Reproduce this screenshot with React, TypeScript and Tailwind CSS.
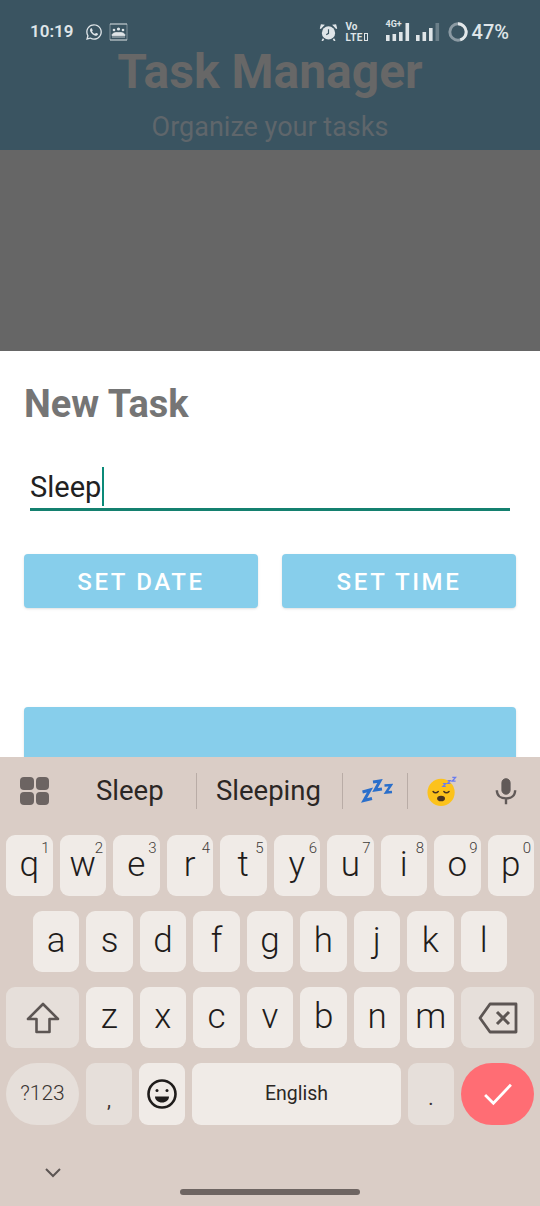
import { FaWhatsapp } from "react-icons/fa";

const row1 = [
  ["q", "1"],
  ["w", "2"],
  ["e", "3"],
  ["r", "4"],
  ["t", "5"],
  ["y", "6"],
  ["u", "7"],
  ["i", "8"],
  ["o", "9"],
  ["p", "0"],
];
const row2 = ["a", "s", "d", "f", "g", "h", "j", "k", "l"];
const row3 = ["z", "x", "c", "v", "b", "n", "m"];

function Key({ label, hint }: { label: string; hint?: string }) {
  return (
    <div className="relative flex h-[61px] flex-1 items-center justify-center rounded-[9px] bg-[#f0ebe7] pb-[2px] text-[35px] font-[350] leading-none text-[#1f1c1b]">
      {label}
      {hint && <span className="absolute right-[3px] top-[3px] text-[15px] font-light leading-[20px] text-[#3f3b39]">{hint}</span>}
    </div>
  );
}

function AlarmIcon() {
  return (
    <svg width="19" height="18" viewBox="0 0 21 20" className="text-[#dfe5e8]">
      <circle cx="10.500" cy="11" r="7.400" fill="currentColor" />
      <path d="M1.500 6.200 5 2.400 2.600 2.200ZM19.500 6.200 16 2.400 18.400 2.200Z" fill="currentColor" stroke="currentColor" strokeWidth="1.400" />
      <path d="M5 17.500 3.500 20M16 17.500 17.500 20" stroke="currentColor" strokeWidth="1.800" />
      <path d="M10.500 7v4.500l-2.500 1.500" stroke="#3a5461" strokeWidth="1.300" fill="none" />
    </svg>
  );
}

function GroupIcon() {
  return (
    <svg width="19" height="18" viewBox="0 0 19 18" className="text-[#dfe5e8]">
      <path d="M1 1v16M18 1v16" stroke="currentColor" strokeWidth="0.700" opacity="0.600" />
      <path d="M1 1h17M1 17h17" stroke="currentColor" strokeWidth="1" />
      <circle cx="9.500" cy="6" r="1.600" fill="currentColor" />
      <circle cx="5" cy="7" r="1.300" fill="currentColor" />
      <circle cx="14" cy="7" r="1.300" fill="currentColor" />
      <path d="M3 12.500c0-2.500 3-3 6.500-3s6.500.5 6.500 3ZM3 14h13" fill="currentColor" stroke="currentColor" strokeWidth="0.800" />
    </svg>
  );
}

function SignalBars({ heights, fadeLast }: { heights: number[]; fadeLast?: boolean }) {
  return (
    <svg width="24" height="18" viewBox="0 0 24 18" className="text-[#dfe5e8]">
      {heights.map((h, i) => (
        <rect key={i} x={i * 6.500} y={18 - h} width="3.600" height={h} fill="currentColor" opacity={fadeLast && i === 3 ? 0.3 : 1} />
      ))}
    </svg>
  );
}

function Zzz() {
  return (
    <svg width="32" height="26" viewBox="0 0 32 26" fill="none" stroke="#2a6fcb" strokeWidth="3">
      <path d="M1.500 14 9 12 3 22.500l8-2" />
      <path d="M12 4l7-1-5 9 7-1" />
      <path d="M23.500 7.500 30 7l-5 7.500 6-.5" strokeWidth="2.400" />
    </svg>
  );
}

function SleepEmoji() {
  return (
    <svg width="30" height="30" viewBox="0 0 32 32">
      <circle cx="15" cy="17.500" r="14.500" fill="#fcc21b" />
      <path d="M6.500 16.500c1.500 1.800 3.800 1.800 5.500 0M18 16.500c1.500 1.800 3.800 1.800 5.500 0" stroke="#4a3420" strokeWidth="1.600" fill="none" strokeLinecap="round" />
      <ellipse cx="15" cy="24" rx="4.200" ry="3" fill="#4a3420" />
      <path d="M17 8h3l-3 3h3" stroke="#6a7cf0" strokeWidth="1.300" fill="none" />
      <path d="M22 5h3l-3 3h3" stroke="#6a7cf0" strokeWidth="1.300" fill="none" />
      <path d="M27 1.500h3.500l-3.500 4h3.500" stroke="#6a7cf0" strokeWidth="1.500" fill="none" />
    </svg>
  );
}

export default function App() {
  return (
    <div className="flex h-[1206px] w-[540px] flex-col overflow-hidden bg-white font-['Roboto',sans-serif]">
      {/* dimmed app header */}
      <div className="relative h-[150px] bg-[#3a5461]">
        <div className="flex h-[48px] items-center justify-between pl-[30px] pr-[31px] pt-[15px] text-[#dfe5e8]">
          <div className="flex items-center">
            <span className="text-[17px] font-semibold">10:19</span>
            <FaWhatsapp className="ml-[12px] text-[18px]" />
            <span className="ml-[6px]">
              <GroupIcon />
            </span>
          </div>
          <div className="flex items-center">
            <AlarmIcon />
            <div className="ml-[8px] flex w-[23px] flex-col text-[10px] font-bold leading-[11px]">
              <span>Vo</span>
              <span className="flex items-center tracking-[0.03em]">
                LTE
                <span className="ml-[1px] h-[8px] w-[4px] border border-[#dfe5e8]" />
              </span>
            </div>
            <div className="relative ml-[17px] h-[18px] w-[24px]">
              <span className="absolute -top-[4px] left-0 text-[9px] font-bold leading-[11px]">4G+</span>
              <SignalBars heights={[6, 7, 9, 18]} />
            </div>
            <div className="ml-[6px] h-[18px] w-[24px]">
              <SignalBars heights={[6, 9, 13, 18]} fadeLast />
            </div>
            <svg width="20" height="20" viewBox="0 0 22 22" className="ml-[8px]" fill="none" strokeWidth="3.200">
              <circle cx="11" cy="11" r="9" stroke="#8b9aa3" />
              <path d="M11 2a9 9 0 0 1 2.500 17.650" stroke="#e3e8ea" />
            </svg>
            <span className="ml-[4px] text-[20px] font-medium">47%</span>
          </div>
        </div>
        <div className="flex flex-col items-center">
          <h1 className="mt-[-3px] text-[48px] font-bold leading-[54px] text-[#676767]">Task Manager</h1>
          <p className="mt-[12px] text-[27px] leading-[32px] text-[#5f666b]">Organize your tasks</p>
        </div>
      </div>

      <div className="h-[201px] bg-[#666666]" />

      {/* dialog sheet */}
      <div className="h-[406px] overflow-hidden bg-white px-[24px]">
        <h2 className="mt-[32px] text-[38px] font-bold leading-[42px] text-[#757575]">New Task</h2>
        <div className="mx-[6px] mt-[42px] flex h-[44px] items-start border-b-[3px] border-[#14806f]">
          <span className="mt-[2px] text-[29px] leading-[36px] text-[#212121]">Sleep</span>
          <span className="ml-[1px] h-[39px] w-[2px] bg-[#0b8a78]" />
        </div>
        <div className="mt-[43px] flex gap-[24px]">
          <button className="h-[54px] flex-1 rounded-[4px] bg-[#87ceeb] pt-[2px] text-[24px] font-medium tracking-[0.11em] text-white shadow-sm">SET DATE</button>
          <button className="h-[54px] flex-1 rounded-[4px] bg-[#87ceeb] pt-[2px] text-[24px] font-medium tracking-[0.11em] text-white shadow-sm">SET TIME</button>
        </div>
        <div className="mt-[99px] h-[100px] rounded-[4px] bg-[#87ceeb] shadow-sm" />
      </div>

      {/* keyboard */}
      <div className="relative flex-1 bg-[#dacdc6]">
        <div className="flex h-[78px] items-center pb-[10px]">
          <div className="ml-[20px] grid w-[29px] grid-cols-2 gap-[2px]">
            <span className="h-[13px] rounded-[4px] bg-[#6c6462]" />
            <span className="h-[13px] rounded-[4px] bg-[#6c6462]" />
            <span className="h-[13px] rounded-[4px] bg-[#6c6462]" />
            <span className="h-[13px] rounded-[4px] bg-[#6c6462]" />
          </div>
          <span className="ml-[47px] w-[67px] text-[27.500px] leading-none text-[#2b2725]">Sleep</span>
          <span className="ml-[33px] h-[36px] w-[1px] bg-[#b9aca6]" />
          <span className="ml-[19px] w-[105px] text-[27.500px] leading-none text-[#2b2725]">Sleeping</span>
          <span className="ml-[21px] h-[36px] w-[1px] bg-[#b9aca6]" />
          <span className="ml-[18px]">
            <Zzz />
          </span>
          <span className="ml-[14px] h-[36px] w-[1px] bg-[#b9aca6]" />
          <span className="ml-[19px]">
            <SleepEmoji />
          </span>
          <svg width="22" height="29" viewBox="0 0 24 30" fill="none" stroke="#615a58" className="ml-[38px]">
            <rect x="7.500" y="1" width="9" height="17" rx="4.500" fill="#615a58" strokeWidth="1" />
            <path d="M2 13.500c0 6 4.500 9 10 9s10-3 10-9M12 22.500V29" strokeWidth="2.600" />
          </svg>
        </div>

        <div className="flex flex-col gap-[15px] px-[6px]">
          <div className="flex gap-[7px]">
            {row1.map(([k, n]) => (
              <Key key={k} label={k} hint={n} />
            ))}
          </div>
          <div className="flex gap-[7px] px-[27px]">
            {row2.map((k) => (
              <Key key={k} label={k} />
            ))}
          </div>
          <div className="flex gap-[7px]">
            <div className="flex h-[61px] w-[73px] items-center justify-center rounded-[9px] bg-[#e6dfda]">
              <svg width="36" height="34" viewBox="0 0 36 34" fill="none" stroke="#5c5553" strokeWidth="2.600" strokeLinejoin="round">
                <path d="M18 3 3 18h8.500v13h13V18H33Z" />
              </svg>
            </div>
            {row3.map((k) => (
              <Key key={k} label={k} />
            ))}
            <div className="flex h-[61px] w-[73px] items-center justify-center rounded-[9px] bg-[#e6dfda]">
              <svg width="40" height="34" viewBox="0 0 40 34" fill="none" stroke="#5c5553" strokeWidth="2.800" strokeLinejoin="round">
                <path d="M12 3h26v28H12L2 17Z" />
                <path d="M19 11l12 12M31 11 19 23" strokeWidth="3" />
              </svg>
            </div>
          </div>
          <div className="flex gap-[7px]">
            <div className="flex h-[62px] w-[73px] items-center justify-center rounded-full bg-[#e6dfda] text-[21px] font-light text-[#3a3533]">?123</div>
            <div className="flex h-[62px] w-[46px] items-end justify-center rounded-[9px] bg-[#e6dfda] pb-[15px] text-[20px] leading-none text-[#3a3533]">,</div>
            <div className="flex h-[62px] w-[46px] items-center justify-center rounded-[9px] bg-[#f0ebe7]">
              <svg width="32" height="32" viewBox="0 0 32 32" fill="none" stroke="#1f1c1b" strokeWidth="2.600">
                <circle cx="16" cy="16" r="13.500" />
                <circle cx="11" cy="12.500" r="1.500" fill="#1f1c1b" stroke="none" />
                <circle cx="21" cy="12.500" r="1.500" fill="#1f1c1b" stroke="none" />
                <path d="M9 18.500h14c0 3.500-3 6-7 6s-7-2.500-7-6Z" fill="#1f1c1b" stroke="none" />
              </svg>
            </div>
            <div className="flex h-[62px] flex-1 items-center justify-center rounded-[9px] bg-[#f0ebe7] text-[19.500px] text-[#2b2725]">English</div>
            <div className="flex h-[62px] w-[46px] items-end justify-center rounded-[9px] bg-[#e6dfda] pb-[17px] text-[20px] leading-none text-[#3a3533]">.</div>
            <div className="flex h-[62px] w-[73px] items-center justify-center rounded-full bg-[#ff6d74]">
              <svg width="30" height="24" viewBox="0 0 32 26" fill="none" stroke="#fff" strokeWidth="3">
                <path d="M2 14l9 9L30 3" />
              </svg>
            </div>
          </div>
        </div>

        <svg width="18" height="12" viewBox="0 0 18 12" fill="none" stroke="#5c5553" strokeWidth="2" className="absolute left-[44px] top-[410px]">
          <path d="M2 2l7 7 7-7" />
        </svg>
        <div className="absolute bottom-[11px] left-[180px] h-[6px] w-[180px] rounded-full bg-[#6e6562]" />
      </div>
    </div>
  );
}
